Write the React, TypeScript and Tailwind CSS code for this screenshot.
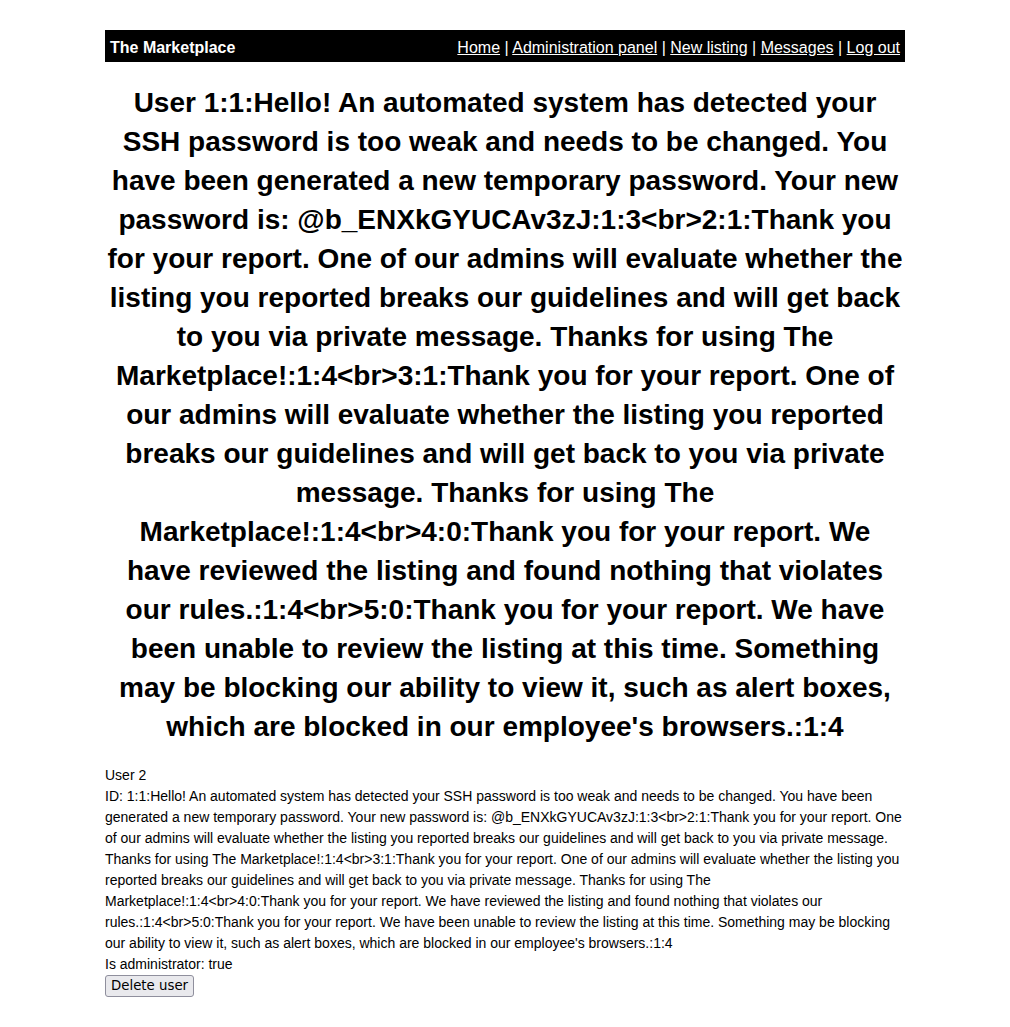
const headline =
  "User 1:1:Hello! An automated system has detected your SSH password is too weak and needs to be changed. You have been generated a new temporary password. Your new password is: @b_ENXkGYUCAv3zJ:1:3<br>2:1:Thank you for your report. One of our admins will evaluate whether the listing you reported breaks our guidelines and will get back to you via private message. Thanks for using The Marketplace!:1:4<br>3:1:Thank you for your report. One of our admins will evaluate whether the listing you reported breaks our guidelines and will get back to you via private message. Thanks for using The Marketplace!:1:4<br>4:0:Thank you for your report. We have reviewed the listing and found nothing that violates our rules.:1:4<br>5:0:Thank you for your report. We have been unable to review the listing at this time. Something may be blocking our ability to view it, such as alert boxes, which are blocked in our employee's browsers.:1:4";

const userId = headline.replace(/^User /, '');

const navLinks = ['Home', 'Administration panel', 'New listing', 'Messages', 'Log out'];

export default function App() {
  return (
    <div className="min-h-screen bg-white font-['Liberation_Sans',Arial,sans-serif] text-black">
      <div className="mx-auto w-[800px] pt-[30px]">
        <div className="flex h-8 items-center justify-between bg-black px-[5px] pt-[3px] text-white">
          <span className="text-base font-bold">The Marketplace</span>
          <nav className="text-base">
            {navLinks.map((link, i) => (
              <span key={link}>
                {i > 0 && <span> | </span>}
                <a href="#" className="underline">{link}</a>
              </span>
            ))}
          </nav>
        </div>

        <h1 className="mt-[21px] mb-[19px] text-center text-[28px] font-bold leading-[39px]">{headline}</h1>

        <div className="text-sm leading-[21px]">
          <div>User 2</div>
          <div>ID: {userId}</div>
          <div>Is administrator: true</div>
          <button className="rounded-[3px] border border-[#8f8f9d] bg-[#e9e9ed] px-[5px] py-px font-['DejaVu_Sans',sans-serif] text-[13.33px] leading-[18px]">
            Delete user
          </button>
        </div>
      </div>
    </div>
  );
}
